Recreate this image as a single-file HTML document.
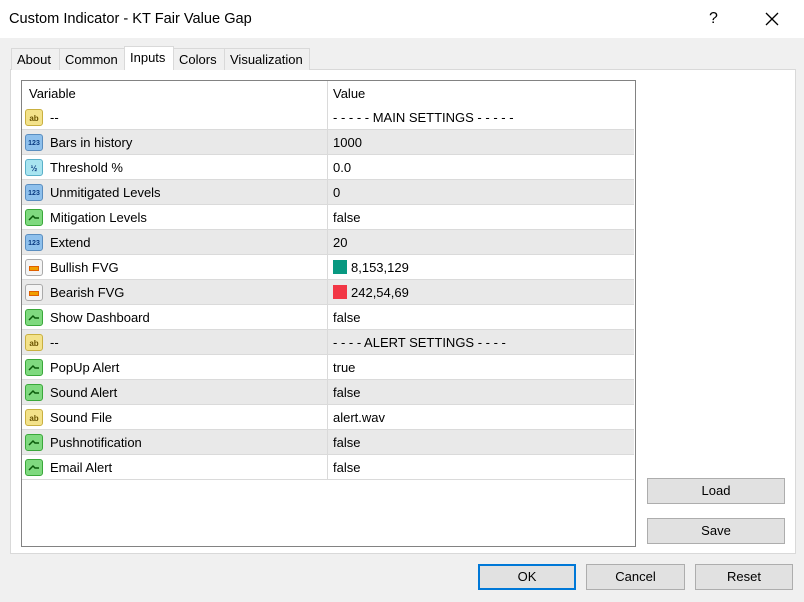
<!DOCTYPE html>
<html><head><meta charset="utf-8"><style>
*{box-sizing:border-box;margin:0;padding:0}
body{width:804px;height:602px;background:#f0f0f0;font-family:"Liberation Sans",sans-serif;font-size:13px;color:#000;position:relative;overflow:hidden}
.title{position:absolute;left:0;top:0;width:804px;height:38px;background:#fff}
.title .t{position:absolute;left:9px;top:11px;font-size:14.6px}
.q{position:absolute;left:709px;top:10px;font-size:16px}
.x{position:absolute;left:764px;top:11px}
.tab{position:absolute;top:48px;height:22px;border:1px solid #d9d9d9;border-bottom:none;background:#f0f0f0;padding:3px 5px 0;font-size:13px}
.tab.on{top:46px;height:24px;background:#fff;padding-top:3px}
.panel{position:absolute;left:10px;top:69px;width:786px;height:485px;background:#fff;border:1px solid #d9d9d9}
.grid{position:absolute;left:21px;top:80px;width:615px;height:467px;border:1px solid #828282;background:#fff}
.row{position:absolute;left:0;width:612px;height:25px;border-bottom:1px solid #dadada}
.row.g{background:#e9e9e9}
.row span{position:absolute;top:5px}
.ic{position:absolute;left:3px;top:4px;width:18px;height:17px;border-radius:3px;font-size:8px;font-weight:bold;text-align:center;line-height:17px}
.ab{background:#f3e28a;border:1px solid #c9b040;color:#6b5400}
.n{background:#8ec0ec;border:1px solid #5a8ec0;color:#0a3a80;font-size:7px}
.b{background:#7fd97f;border:1px solid #3aa83a}
.c{background:#f4f4f4;border:1px solid #aaa}
.c i{position:absolute;left:3px;top:6px;width:10px;height:5px;background:#f0a000;border:1px solid #e06000}
.btn{position:absolute;height:26px;background:#e1e1e1;border:1px solid #adadad;text-align:center;line-height:24px;font-size:13px}
.sw{display:inline-block;width:14px;height:14px;vertical-align:-2px;margin-right:4px}
</style></head><body>
<div class="title"><div class="t">Custom Indicator - KT Fair Value Gap</div><div class="q">?</div>
<svg class="x" width="16" height="16"><path d="M2 2L14 14M14 2L2 14" stroke="#000" stroke-width="1.3"/></svg></div>
<div class="panel"></div>
<div class="tab" style="left:11px;width:53px">About</div>
<div class="tab" style="left:59px;width:66px">Common</div>
<div class="tab" style="left:173px;width:52px">Colors</div>
<div class="tab" style="left:224px;width:86px">Visualization</div>
<div class="tab on" style="left:124px;width:50px">Inputs</div>
<div class="grid">
<div class="row" style="top:0;border:none"><span style="left:7px;top:5px">Variable</span><span style="left:311px;top:5px">Value</span></div>
<div style="position:absolute;left:305px;top:0;width:1px;height:24px;background:#dadada"></div>
<div id="rows"></div>
</div>
<div class="btn" style="left:647px;top:478px;width:138px">Load</div>
<div class="btn" style="left:647px;top:518px;width:138px">Save</div>
<div class="btn" style="left:478px;top:564px;width:98px;border:2px solid #0078d7;line-height:22px">OK</div>
<div class="btn" style="left:586px;top:564px;width:99px">Cancel</div>
<div class="btn" style="left:695px;top:564px;width:98px">Reset</div>
<script>
var R=[["ab","--","- - - - - MAIN SETTINGS - - - - -"],["n","Bars in history","1000"],["h","Threshold %","0.0"],["n","Unmitigated Levels","0"],["b","Mitigation Levels","false"],["n","Extend","20"],["c","Bullish FVG","<i class='sw' style='background:#089981'></i>8,153,129"],["c","Bearish FVG","<i class='sw' style='background:#f23645'></i>242,54,69"],["b","Show Dashboard","false"],["ab","--","- - - - ALERT SETTINGS - - - -"],["b","PopUp Alert","true"],["b","Sound Alert","false"],["ab","Sound File","alert.wav"],["b","Pushnotification","false"],["b","Email Alert","false"]];
var h="";R.forEach(function(r,i){var ic="";
if(r[0]=="ab")ic="<div class='ic ab'>ab</div>";
else if(r[0]=="n")ic="<div class='ic n'>123</div>";
else if(r[0]=="h")ic="<div class='ic n' style='background:#a8e4f0;border-color:#5ab0c8;font-size:8px'>½</div>";
else if(r[0]=="b")ic="<div class='ic b'><svg width='16' height='15'><path d='M3 10L7 6L9 8L13 8' stroke='#0a5a0a' stroke-width='1.5' fill='none'/></svg></div>";
else ic="<div class='ic c'><i></i></div>";
h+="<div class='row"+(i%2?" g":"")+"' style='top:"+(24+i*25)+"px'>"+ic+"<span style='left:28px'>"+r[1]+"</span><span style='left:311px'>"+r[2]+"</span><div style='position:absolute;left:305px;top:0;width:1px;height:25px;background:#dadada'></div></div>";});
document.getElementById("rows").innerHTML=h;
</script>
</body></html>
